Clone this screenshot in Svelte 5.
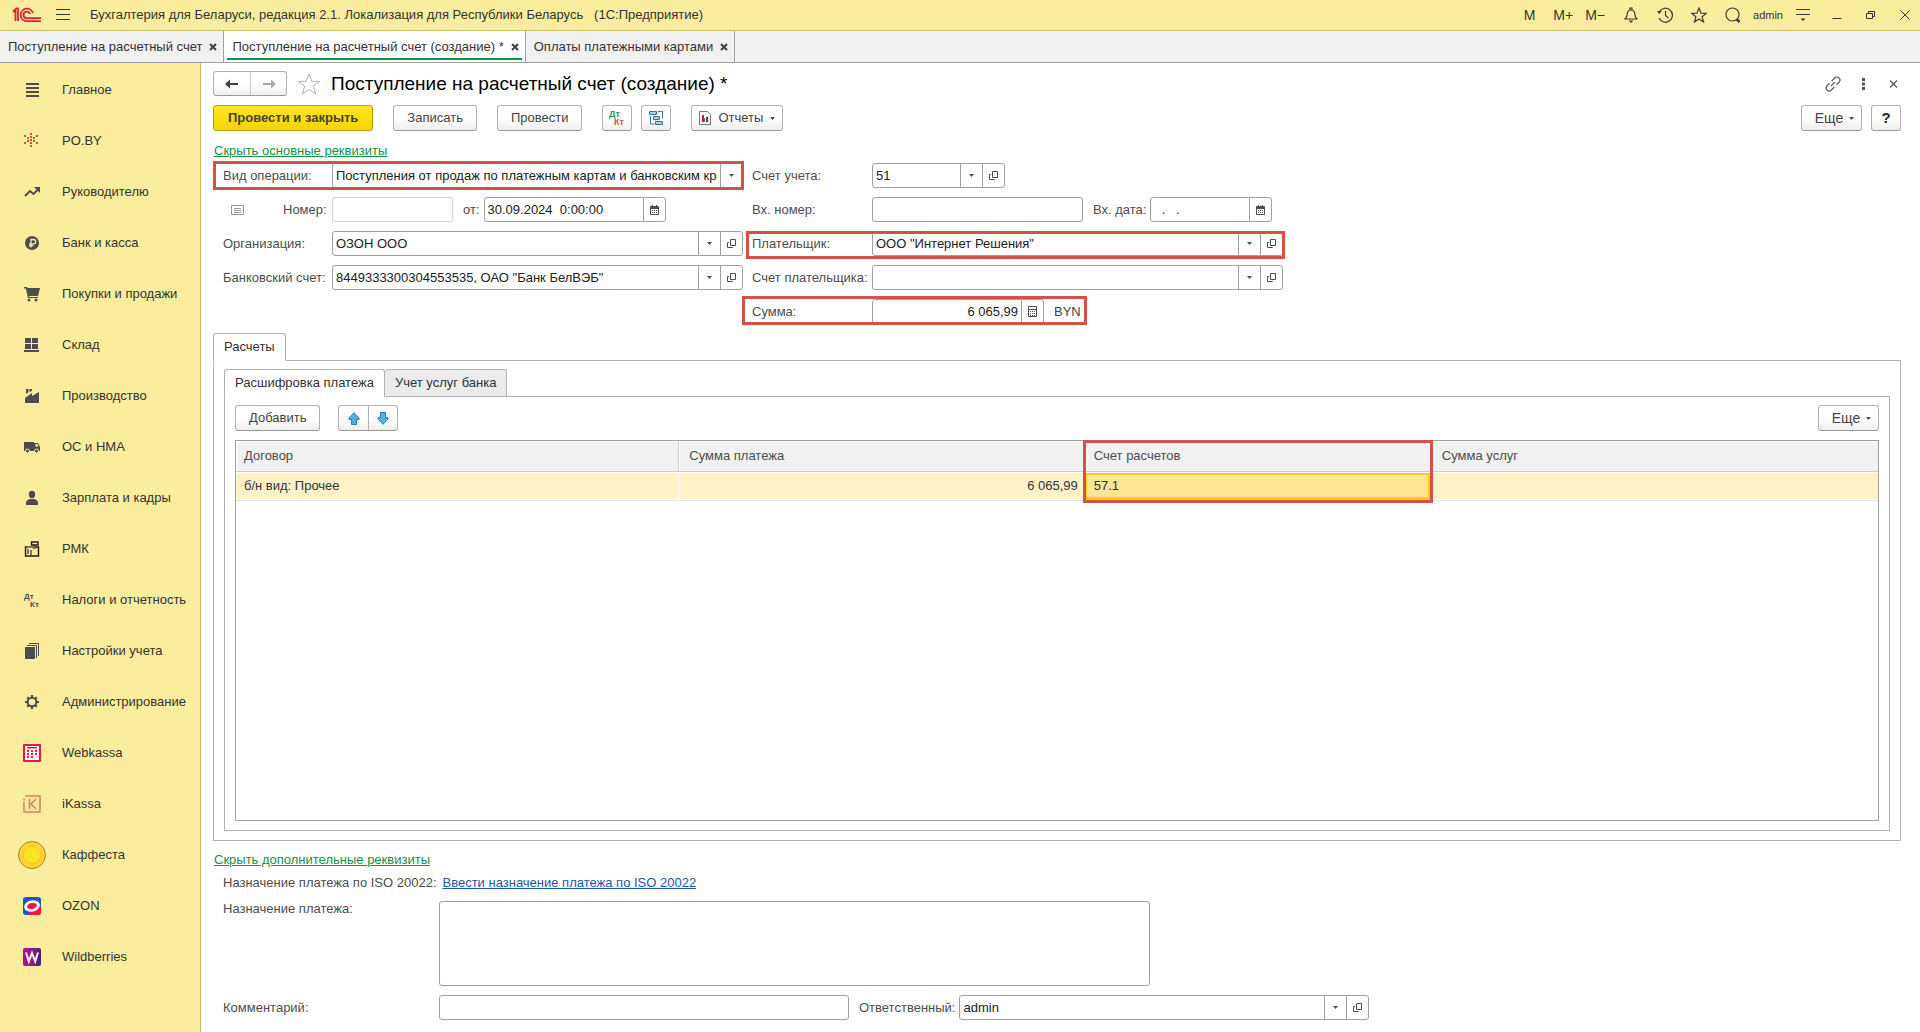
<script>
  const dots = [[6,0],[0,2],[12,2],[6,3],[3,4],[9,4],[6,6],[3,7],[9,7],[0,9],[12,9],[6,9],[6,12]];

  const icons = {
    main: '<path d="M2 1h13v2H2zM2 5h13v2H2zM2 9h13v2H2zM2 13h13v2H2z"/>',
    po: '<g fill="#d8503f">' + dots.map(([x, y]) => `<rect x="${x}" y="${y}" width="2" height="2"/>`).join('') + '</g>',
    trend: '<path d="M1 12l5-5 3.500 3L14 5.500" fill="none" stroke="#4d4d4d" stroke-width="2"/><path d="M10 3h6v6z"/>',
    ruble: '<circle cx="8" cy="8" r="7"/><path d="M7 12.500V4.500h2.500a2 2 0 0 1 0 4.300H5M5 10.700h4.500" fill="none" stroke="#fbed9e" stroke-width="1.300"/>',
    cart: '<path d="M0 1h3l.6 1H16l-2 8H5l.3 1H14v1H4L1.800 2.500H0z"/><circle cx="5" cy="14" r="1.500"/><circle cx="12" cy="14" r="1.500"/>',
    store: '<path d="M1 1h6v5H1zM8 1h6v5H8zM1 7h6v5H1zM8 7h6v5H8zM0 13h15v2H0z"/>',
    factory: '<path d="M1 15V10l7-5v3l7-4v11zM2 1h2.500v3L2 6zM5.500 1H8v1.500l-2.500 2z"/>',
    truck: '<path d="M0 3h10v9H0zM10 4h4l2 4v4h-6z"/><path d="M11.500 5h2l1 2.500h-3z" fill="#fbed9e"/><g stroke="#fbed9e"><circle cx="3.500" cy="12" r="2"/><circle cx="12.500" cy="12" r="2"/></g>',
    person: '<ellipse cx="8" cy="4.500" rx="3.200" ry="3.700"/><path d="M2 15v-2.500C2 10.500 4 9.500 6 9h4c2 .5 4 1.500 4 3.500V15z"/>',
    till: '<path d="M7.500 1h6.500v3H7.500zM10.500 4v2M1.500 6h13v9h-13z" fill="none" stroke="#1f1a17" stroke-width="1.400"/><path d="M3 5h8v2H3zM3 8h2v5H3zM6 9h2v5H6zM9 7h3v1H9z" fill="#7d7752"/>',
    tax: '<text x="0" y="7" font-size="8" font-weight="700">Дт</text><text x="6" y="15" font-size="8" font-weight="700">Кт</text>',
    pages: '<path d="M1 4h10v12H1z"/><path d="M3 2.500h9.500V15M5 .5h9.500V13" fill="none" stroke="#4d4d4d"/>',
    gear: '<circle cx="8" cy="8" r="4.300" fill="none" stroke="#4d4d4d" stroke-width="2"/><path d="M8 1v3M8 12v3M1 8h3M12 8h3M3.200 3.200l1.800 1.800M11 11l1.800 1.800M12.800 3.200L11 5M5 11l-1.800 1.800" stroke="#4d4d4d" stroke-width="2.200"/>',
    webkassa: '<rect width="18" height="18" rx="1" fill="#f8133f"/><path d="M2 2h14v14H2z" fill="#fff"/><path d="M4 3h10v1.500H4zM4 6h2v2H4zM8 6h2v2H8zM12 6h2v2h-2zM4 9h2v2H4zM8 9h2v2H8zM12 9h2v2h-2zM4 12h2v2H4zM8 12h2v2H8z" fill="#f8133f"/>',
    ikassa: '<path d="M2 1h15v16H1V7M1 3.500v2M6.500 4v10M13 4L8 9l5 5" fill="none" stroke="#e0805f" stroke-width="1.600"/>',
    coin: '<circle cx="14" cy="14" r="13.500" fill="#ffd436" stroke="#a8871c"/><circle cx="14" cy="14" r="9" fill="#ffe21f" stroke="#f7c02c"/><path d="M10 11h1M14 10h1M18 12h1M11 15h1M15 14h1M18 17h1M13 18h1" stroke="#fff3a0"/>',
    ozon: '<rect width="18" height="18" rx="3" fill="#1857c4"/><path d="M18 8v7a3 3 0 0 1-3 3H4z" fill="#f8133f"/><ellipse cx="9" cy="9" rx="8" ry="5.500" fill="#fff" transform="rotate(-12 9 9)"/><ellipse cx="9" cy="9" rx="5" ry="3" fill="#f8133f" transform="rotate(-12 9 9)"/>',
    wb: '<defs><linearGradient id="wb"><stop offset=".4" stop-color="#a3129b"/><stop offset="1" stop-color="#46206b"/></linearGradient></defs><rect width="18" height="18" rx="2" fill="url(#wb)"/><path d="M3 4.500l2.800 9L9 5l3.200 8.500 2.800-9" fill="none" stroke="#fff" stroke-width="2"/>'
  };

  const sections = [
    ['main', 'Главное', 16], ['po', 'PO.BY', 16], ['trend', 'Руководителю', 16], ['ruble', 'Банк и касса', 16],
    ['cart', 'Покупки и продажи', 16], ['store', 'Склад', 16], ['factory', 'Производство', 16], ['truck', 'ОС и НМА', 16],
    ['person', 'Зарплата и кадры', 16], ['till', 'РМК', 16], ['tax', 'Налоги и отчетность', 16], ['pages', 'Настройки учета', 16],
    ['gear', 'Администрирование', 16], ['webkassa', 'Webkassa', 18], ['ikassa', 'iKassa', 18], ['coin', 'Каффеста', 28],
    ['ozon', 'OZON', 18], ['wb', 'Wildberries', 18]
  ];

  const windows = [
    { title: 'Поступление на расчетный счет', active: false },
    { title: 'Поступление на расчетный счет (создание) *', active: true },
    { title: 'Оплаты платежными картами', active: false }
  ];
</script>

{#snippet caret()}
  <svg class="caret" width="5" height="3" viewBox="0 0 5 3" aria-hidden="true"><path d="M0 0h5L2.500 3z" fill="#4d4d4d" /></svg>
{/snippet}

{#snippet openBtn()}
  <button class="seg" type="button" aria-label="Открыть">
    <svg width="10" height="10" viewBox="0 0 10 10" fill="none" stroke="#4d4d4d"><path d="M3.500.5h5v6h-5zM2 3.500H.5v5h5V8" /></svg>
  </button>
{/snippet}

{#snippet calBtn()}
  <button class="seg" type="button" aria-label="Календарь">
    <svg width="9" height="10" viewBox="0 0 9 10"><path d="M.5 1.500h8v8h-8z" fill="none" stroke="#4d4d4d" /><path d="M1 1h7v3H1zM2 0h1v1H2zM6 0h1v1H6zM2 5h1v1H2zM4 5h1v1H4zM6 5h1v1H6zM2 7h1v1H2zM4 7h1v1H4zM6 7h1v1H6z" fill="#4d4d4d" /></svg>
  </button>
{/snippet}

{#snippet combo(id, value, open)}
  <div class="field">
    <select {id}><option>{value}</option></select>
    <span class="seg">{@render caret()}</span>
    {#if open}{@render openBtn()}{/if}
  </div>
{/snippet}

<div class="app">
  <header class="titlebar">
    <svg class="logo" width="30" height="16" viewBox="0 0 30 16" fill="none" stroke="#e2203a" stroke-width="1.800" aria-label="1С" role="img">
      <path d="M1 4.500h2.500V14M1 4.500L4.500 1.500H6V14" />
      <path d="M21 6a6.300 6.300 0 1 0-6 8.200h14" />
      <path d="M18 7a3.300 3.300 0 1 0-3 4.200h14" />
    </svg>
    <button class="bare burger" type="button" aria-label="Меню">
      <svg width="14" height="12" viewBox="0 0 14 12" stroke="#333"><path d="M0 .5h14M0 5.500h14M0 10.500h14" /></svg>
    </button>
    <span class="apptitle">Бухгалтерия для Беларуси, редакция 2.1. Локализация для Республики Беларусь &nbsp; (1С:Предприятие)</span>
    <div class="tools">
      <button class="bare mem" type="button">M</button>
      <button class="bare mem" type="button">M+</button>
      <button class="bare mem" type="button">M−</button>
      <button class="bare" type="button" aria-label="Уведомления">
        <svg width="16" height="16" viewBox="0 0 16 16" fill="none" stroke="#3a3a3a" stroke-width="1.200"><path d="M1.500 12c2-1 2.500-2.500 2.700-5 .2-2.500 1.500-4 3.800-4s3.600 1.500 3.800 4c.2 2.500.7 4 2.700 5zM7 2.500V1h2v1.500" /><path d="M5.500 13.500h5L8 16z" fill="#3a3a3a" stroke="none" /></svg>
      </button>
      <button class="bare" type="button" aria-label="История">
        <svg width="16" height="16" viewBox="0 0 16 16" fill="none" stroke="#3a3a3a" stroke-width="1.200"><path d="M2 5.500a7 7 0 1 1 0 5.500M8.500 4v4.500l3 2.500" /><path d="M0 4l5 0-3 3z" fill="#3a3a3a" stroke="none" /></svg>
      </button>
      <button class="bare" type="button" aria-label="Избранное">
        <svg width="16" height="16" viewBox="0 0 16 16" fill="none" stroke="#3a3a3a" stroke-width="1.200"><path d="M8 1l2 5.200 5.300.2-4.200 3.400 1.500 5.200L8 12l-4.600 3 1.500-5.200L.7 6.400 6 6.200z" /></svg>
      </button>
      <button class="bare" type="button" aria-label="Поиск">
        <svg width="16" height="16" viewBox="0 0 16 16" fill="none" stroke="#3a3a3a" stroke-width="1.200"><circle cx="7.500" cy="7.500" r="6.500" /><path d="M11.500 12l3 3" stroke-width="2.500" /></svg>
      </button>
      <button class="bare user" type="button">admin</button>
      <button class="bare" type="button" aria-label="Настройки">
        <svg width="16" height="14" viewBox="0 0 16 14" stroke="#3a3a3a"><path d="M1 1.500h14M1 6.500h14" /><path d="M5.500 10.500h5L8 13z" fill="#3a3a3a" stroke="none" /></svg>
      </button>
      <button class="bare win" type="button" aria-label="Свернуть">
        <svg width="10" height="10" viewBox="0 0 10 10" stroke="#333"><path d="M.5 8.500h9" /></svg>
      </button>
      <button class="bare win" type="button" aria-label="Восстановить">
        <svg width="10" height="10" viewBox="0 0 10 10" fill="none" stroke="#333"><path d="M.5 3.500h6v5h-6zM2.500 3.500v-2h6v5h-2" /></svg>
      </button>
      <button class="bare win" type="button" aria-label="Закрыть">
        <svg width="10" height="10" viewBox="0 0 10 10" stroke="#333"><path d="M.5.5l9 9M9.500.5l-9 9" /></svg>
      </button>
    </div>
  </header>

  <div class="wintabs" role="tablist">
    {#each windows as w}
      <div class="wintab" class:active={w.active}>
        <button class="bare" type="button" role="tab" aria-selected={w.active}>{w.title}</button>
        <button class="bare close" type="button" aria-label="Закрыть вкладку">
          <svg width="8" height="8" viewBox="0 0 8 8" stroke="#3f3f3f" stroke-width="2"><path d="M1 1l6 6M7 1L1 7" /></svg>
        </button>
      </div>
    {/each}
  </div>

  <div class="body">
    <nav class="side">
      {#each sections as [key, label, size]}
        <a href="#{key}">
          <span class="ic"><svg width={size} height={size} viewBox="0 0 {size} {size}" fill="#4d4d4d" aria-hidden="true">{@html icons[key]}</svg></span>
          <span>{label}</span>
        </a>
      {/each}
    </nav>

    <main>
      <div class="head">
        <div class="pair">
          <button type="button" aria-label="Назад"><svg width="14" height="10" viewBox="0 0 14 10"><path d="M0 5l5-4.500V4h8v2H5v3.500z" fill="#404040" /></svg></button>
          <button type="button" aria-label="Вперед"><svg width="14" height="10" viewBox="0 0 14 10"><path d="M14 5L9 .5V4H1v2h8v3.500z" fill="#a8a8a8" /></svg></button>
        </div>
        <button class="bare star" type="button" aria-label="В избранное">
          <svg width="24" height="24" viewBox="0 0 24 24" fill="none" stroke="#b0b0b0"><path d="M12 2l2.700 7.300 8 .1-6.400 4.800L18.700 22 12 17.300 5.300 22l2.400-7.800L1.300 9.400l8-.1z" /></svg>
        </button>
        <h1>Поступление на расчетный счет (создание) *</h1>
        <div class="headtools">
          <button class="bare" type="button" aria-label="Получить ссылку">
            <svg width="16" height="16" viewBox="0 0 16 16" fill="none" stroke="#555" stroke-width="1.200"><g transform="rotate(-45 8 8)"><path d="M6 5H2.500a3 3 0 0 0 0 6h4.500M10 11h3.500a3 3 0 0 0 0-6H9M5 8h6" /></g></svg>
          </button>
          <button class="bare" type="button" aria-label="Дополнительно">
            <svg width="16" height="12" viewBox="0 0 16 12" fill="#555"><path d="M7 0h3v3H7zM7 4.500h3v3H7zM7 9h3v3H7z" /></svg>
          </button>
          <button class="bare" type="button" aria-label="Закрыть форму">
            <svg width="16" height="8" viewBox="0 0 16 8" stroke="#555" stroke-width="1.200"><path d="M5 .5l7 7M12 .5l-7 7" /></svg>
          </button>
        </div>
      </div>

      <div class="toolbar">
        <button class="btn primary" type="button">Провести и закрыть</button>
        <button class="btn" type="button">Записать</button>
        <button class="btn" type="button">Провести</button>
        <div class="icons">
          <button class="btn sq" type="button" aria-label="Дт Кт">
            <svg width="18" height="18" viewBox="0 0 18 18" font-weight="700" font-size="9" aria-hidden="true"><text x="1" y="8" fill="#179a52">Дт</text><text x="6" y="16" fill="#d8503f">Кт</text></svg>
          </button>
          <button class="btn sq" type="button" aria-label="Структура подчиненности">
            <svg width="16" height="16" viewBox="0 0 16 16" fill="#9fd0e4" stroke="#2f7a99"><path d="M1.500 1.500h7v3h-7zM5.500 6.500h6v3h-6zM7.500 11.500h7v3h-7z" /><path d="M10 1.500h4.500v7M2.500 6v8h4" fill="none" /></svg>
          </button>
        </div>
        <button class="btn reports" type="button">
          <svg width="12" height="14" viewBox="0 0 12 14"><path d="M.5.5h8l3 3v10H.5z" fill="#fff" stroke="#777" /><path d="M3 4h2v7H3z" fill="#d8103f" /><path d="M5 7h1v4H5z" fill="#179a52" /><path d="M7 6h2v5H7z" fill="#b3123c" /></svg>
          Отчеты {@render caret()}
        </button>
        <button class="btn more push" type="button">Еще {@render caret()}</button>
        <button class="btn sq help" type="button">?</button>
      </div>

      <a class="toggle" href="#main-details">Скрыть основные реквизиты</a>

      <form class="form" id="main-details">
        <div class="col left">
          <div class="row mark mark-op">
            <label for="op">Вид операции:</label>
            {@render combo('op', 'Поступления от продаж по платежным картам и банковским кредитам', false)}
          </div>
          <div class="row">
            <span class="numlabel">
              <svg width="13" height="10" viewBox="0 0 13 10" fill="none" stroke="#999"><path d="M.5.5h12v9H.5zM3 3.500h7M3 5.500h7M3 7.500h7" /></svg>
              <label for="num">Номер:</label>
            </span>
            <div class="field num"><input id="num" /></div>
            <label class="inner" for="date">от:</label>
            <div class="field date"><input id="date" value="30.09.2024  0:00:00" />{@render calBtn()}</div>
          </div>
          <div class="row">
            <label for="org">Организация:</label>
            {@render combo('org', 'ОЗОН ООО', true)}
          </div>
          <div class="row">
            <label for="bank">Банковский счет:</label>
            {@render combo('bank', '8449333300304553535, ОАО "Банк БелВЭБ"', true)}
          </div>
        </div>
        <div class="col right">
          <div class="row acc">
            <label for="acc">Счет учета:</label>
            {@render combo('acc', '51', true)}
          </div>
          <div class="row">
            <label for="innum">Вх. номер:</label>
            <div class="field innum"><input id="innum" /></div>
            <label class="inner" for="indate">Вх. дата:</label>
            <div class="field indate"><input id="indate" value="  .   ." />{@render calBtn()}</div>
          </div>
          <div class="row mark mark-payer">
            <label for="payer">Плательщик:</label>
            {@render combo('payer', 'ООО "Интернет Решения"', true)}
          </div>
          <div class="row">
            <label for="payacc">Счет плательщика:</label>
            {@render combo('payacc', '', true)}
          </div>
          <div class="row mark mark-sum">
            <label for="sum">Сумма:</label>
            <div class="field sum">
              <input id="sum" value="6 065,99" />
              <button class="seg" type="button" aria-label="Калькулятор">
                <svg width="9" height="11" viewBox="0 0 9 11"><path d="M.5.5h8v10h-8zM1 3.500h7" fill="none" stroke="#4d4d4d" /><path d="M2 5h1v1H2zM4 5h1v1H4zM6 5h1v1H6zM2 7h1v1H2zM4 7h1v1H4zM6 7h1v1H6zM2 9h1v1H2zM4 9h1v1H4zM6 9h1v1H6z" fill="#4d4d4d" /></svg>
              </button>
            </div>
            <span class="cur">BYN</span>
          </div>
        </div>
      </form>

      <div class="tabs outer" role="tablist">
        <button class="tab on" type="button" role="tab" aria-selected="true">Расчеты</button>
      </div>
      <section class="panel">
        <div class="tabs" role="tablist">
          <button class="tab on" type="button" role="tab" aria-selected="true">Расшифровка платежа</button>
          <button class="tab" type="button" role="tab" aria-selected="false">Учет услуг банка</button>
        </div>
        <section class="panel inside">
          <div class="tbar">
            <button class="btn" type="button">Добавить</button>
            <div class="pair blue">
              <button type="button" aria-label="Вверх"><svg width="12" height="13" viewBox="0 0 12 13"><path d="M6 .7l5 5.300v1.500H8.500v5h-5v-5H1V6z" fill="#4fb2e3" stroke="#2b7fae" /></svg></button>
              <button type="button" aria-label="Вниз"><svg width="12" height="13" viewBox="0 0 12 13"><path d="M6 12.300L1 7V5.500h2.500v-5h5v5H11V7z" fill="#4fb2e3" stroke="#2b7fae" /></svg></button>
            </div>
            <button class="btn more push" type="button">Еще {@render caret()}</button>
          </div>
          <div class="grid">
            <table>
              <colgroup><col class="c1" /><col class="c2" /><col class="c3" /><col class="c4" /></colgroup>
              <thead>
                <tr><th>Договор</th><th>Сумма платежа</th><th class="hl">Счет расчетов</th><th>Сумма услуг</th></tr>
              </thead>
              <tbody>
                <tr><td>б/н вид: Прочее</td><td class="r">6 065,99</td><td class="cell">57.1</td><td></td></tr>
              </tbody>
            </table>
          </div>
        </section>
      </section>

      <a class="toggle second" href="#extra-details">Скрыть дополнительные реквизиты</a>

      <form class="extra" id="extra-details">
        <div class="xrow iso">
          <span>Назначение платежа по ISO 20022:</span>
          <a href="#iso">Ввести назначение платежа по ISO 20022</a>
        </div>
        <div class="xrow">
          <label for="purpose">Назначение платежа:</label>
          <textarea id="purpose"></textarea>
        </div>
        <div class="xrow">
          <label for="comment">Комментарий:</label>
          <div class="field comment"><input id="comment" /></div>
          <label class="inner" for="resp">Ответственный:</label>
          <div class="resp">{@render combo('resp', 'admin', true)}</div>
        </div>
      </form>
    </main>
  </div>
</div>

<style>
  :global(body) { background: #fff; }
  .app, .app :global(*) { box-sizing: border-box; }
  .app {
    display: flex;
    flex-direction: column;
    min-height: 100vh;
    font: 13px/16px "Liberation Sans", Arial, sans-serif;
    color: #333;
  }
  button, input, select, textarea { font: inherit; color: inherit; margin: 0; }
  button { white-space: nowrap; }
  svg { display: block; flex: none; }
  .bare { display: flex; align-items: center; justify-content: center; background: none; border: 0; padding: 0; }

  .titlebar {
    display: flex;
    align-items: center;
    height: 31px;
    padding: 0 7px 0 12px;
    background: #fbed9e;
    border-bottom: 1px solid #cdbd6a;
  }
  .burger { margin: 0 20px 0 14px; }
  .apptitle { white-space: nowrap; }
  .tools { display: flex; align-items: center; margin-left: auto; gap: 18px; }
  .mem { font-size: 14px; }
  .mem:nth-child(2) { margin-right: -6px; }
  .user { font-size: 11px; margin: 0 -6px; }
  .win { width: 16px; }

  .wintabs { display: flex; height: 32px; background: #f1f1f1; border-bottom: 1px solid #a0a0a0; }
  .wintab { position: relative; display: flex; align-items: center; gap: 7px; padding: 0 6px 0 8px; border-right: 1px solid #a0a0a0; }
  .wintab.active { background: #fff; }
  .wintab.active::after { content: ""; position: absolute; left: 3px; right: 3px; bottom: 2px; height: 2px; background: #0c9648; }

  .body { display: flex; flex: 1; }
  .side { width: 201px; flex: none; padding-top: 1px; background: #fbed9e; border-right: 1px solid #c9b965; }
  .side a { display: flex; align-items: center; height: 51px; color: #333; text-decoration: none; white-space: nowrap; }
  .ic { display: flex; justify-content: center; width: 28px; margin: 0 16px 0 18px; }

  main { display: flex; flex-direction: column; flex: 1; min-width: 0; padding: 8px 19px 12px 12px; }
  .head { display: flex; align-items: center; height: 25px; }
  .star { margin: 0 10px; }
  h1 { margin: 0; font-size: 19px; line-height: 24px; font-weight: 400; color: #000; white-space: nowrap; }
  .headtools { display: flex; gap: 14px; margin-left: auto; }

  .pair { display: flex; height: 25px; border: 1px solid #b3b3b3; border-bottom-color: #999; border-radius: 3px; background: linear-gradient(#fff 50%, #eee); }
  .pair button { display: flex; align-items: center; justify-content: center; width: 36px; padding: 0; border: 0; background: none; }
  .pair button + button { border-left: 1px solid #ccc; }
  .pair.blue { height: 26px; margin-left: 18px; }
  .pair.blue button { width: 29px; }
  .pair.blue button + button { border-color: #b3b3b3; }

  .toolbar { display: flex; gap: 20px; margin-top: 9px; }
  .icons { display: flex; gap: 9px; }
  .btn {
    display: flex;
    align-items: center;
    justify-content: center;
    height: 26px;
    padding: 0 13px;
    border: 1px solid #b3b3b3;
    border-bottom-color: #999;
    border-radius: 3px;
    background: linear-gradient(#fff 50%, #eee);
    color: #444;
  }
  .primary { padding: 0 14px; font-weight: 700; border-color: #b79d12; background: linear-gradient(#ffe723, #f5d400); color: #4a4330; }
  .sq { width: 30px; padding: 0; }
  .reports { gap: 7px; padding: 0 7px; }
  .more { gap: 6px; width: 61px; padding: 0 6px 0 12px; font-size: 14px; }
  .push { margin-left: auto; }
  .help { margin-left: -11px; font-size: 15px; font-weight: 700; color: #222; }

  .toggle { align-self: flex-start; margin: 12px 0 0 1px; color: #119349; }
  .form { display: grid; grid-template-columns: minmax(0, 530px) minmax(0, 531px); gap: 9px; margin-top: 4px; }
  .col { display: flex; flex-direction: column; gap: 9px; }
  .row { position: relative; display: flex; align-items: center; height: 25px; }
  .row > label:first-child, .numlabel { flex: none; width: 120px; }
  .left .row { padding-left: 10px; }
  .left .row > label:first-child, .left .numlabel { width: 109px; }
  label, .xrow span { color: #4d4d4d; white-space: nowrap; }
  .numlabel { display: flex; align-items: center; gap: 39px; padding-left: 8px; }
  .inner { margin: 0 4px 0 10px; }

  .field { display: flex; flex: 1; min-width: 0; height: 25px; border: 1px solid #a0a0a0; border-radius: 3px; background: #fff; }
  .field input, .field select { flex: 1; min-width: 0; width: 0; padding: 0 3px; border: 0; background: none; appearance: none; outline: 0; color: #222; }
  .seg { display: flex; align-items: center; justify-content: center; flex: none; width: 22px; padding: 0; border: 0; border-left: 1px solid #a0a0a0; background: none; }
  .num { flex: 0 1 121px; border-color: #d0d0d0; }
  .date { flex: 0 1 182px; }
  .acc :global(.field) { flex: 0 1 133px; }
  .innum { flex: 0 1 211px; }
  .indate { flex: 0 1 122px; }
  .sum input { text-align: right; }
  .cur { margin-left: 10px; color: #444; }

  .mark::after { content: ""; position: absolute; border: 3px solid #d45145; pointer-events: none; }
  .mark-op::after { inset: -2px -1px -2px 0; }
  .mark-payer::after { inset: 0 -2px -3px -6px; }
  .mark-sum { align-self: flex-start; }
  .mark-sum .sum { flex: none; width: 172px; }
  .mark-sum::after { inset: -3px -6px -1px -10px; }

  .tabs { display: flex; height: 28px; margin-bottom: -1px; }
  .outer { margin-top: 9px; }
  .tab { position: relative; padding: 0 10px; border: 1px solid #b3b3b3; border-radius: 3px 3px 0 0; background: #ebebeb; color: #333; }
  .tab + .tab { border-left: 0; }
  .tab.on { background: #fff; border-bottom-color: #fff; }
  .panel { display: flex; flex-direction: column; flex: 1; padding: 8px 10px 9px; border: 1px solid #b3b3b3; }
  .panel.inside { padding: 8px 10px 9px; }
  .tbar { display: flex; }
  .grid { flex: 1; min-height: 120px; margin-top: 9px; border: 1px solid #a0a0a0; }

  table { width: 100%; table-layout: fixed; border-collapse: separate; border-spacing: 0; }
  .c1 { width: 27%; }
  .c2 { width: 24.63%; }
  .c3 { width: 21.2%; }
  th, td { position: relative; padding: 0 8px; text-align: left; font-weight: 400; white-space: nowrap; }
  th { height: 31px; color: #4d4d4d; background: #f1f1f1; border-right: 1px solid #ccc; border-bottom: 1px solid #ccc; box-shadow: inset 1px 1px #fff; }
  td { height: 29px; background: #fdf2c8; color: #333; border-right: 1px solid #fff; border-bottom: 1px solid #e3e3e3; box-shadow: inset 0 1px #fff, inset 0 -1px #fff; }
  th + th, td + td { padding-left: 10px; }
  th:last-child, td:last-child { border-right: 0; }
  td.r { text-align: right; padding-right: 5px; }
  .cell { background: #fee591; box-shadow: inset 0 1px #fff, inset 0 0 0 3px #fbc91f; background-clip: padding-box; }
  .hl::after { content: ""; position: absolute; z-index: 1; top: -1px; left: -1px; right: -2px; height: 57px; border: 3px solid #d45145; pointer-events: none; }

  .second { margin-top: 11px; }
  .extra { display: flex; flex-direction: column; gap: 9px; margin: 7px 0 0 10px; }
  .xrow { display: flex; align-items: center; max-width: 1150px; }
  .xrow > label:first-child { flex: none; width: 216px; }
  .iso { gap: 6px; margin-bottom: 1px; }
  .xrow a { color: #1a58b4; }
  textarea { flex: 0 1 711px; min-width: 0; height: 85px; padding: 4px; border: 1px solid #a0a0a0; border-radius: 3px; resize: none; }
  .xrow:has(textarea) { align-items: flex-start; }
  .comment { flex: 0 1 410px; }
  .resp { display: flex; flex: 0 1 410px; min-width: 0; }
</style>
